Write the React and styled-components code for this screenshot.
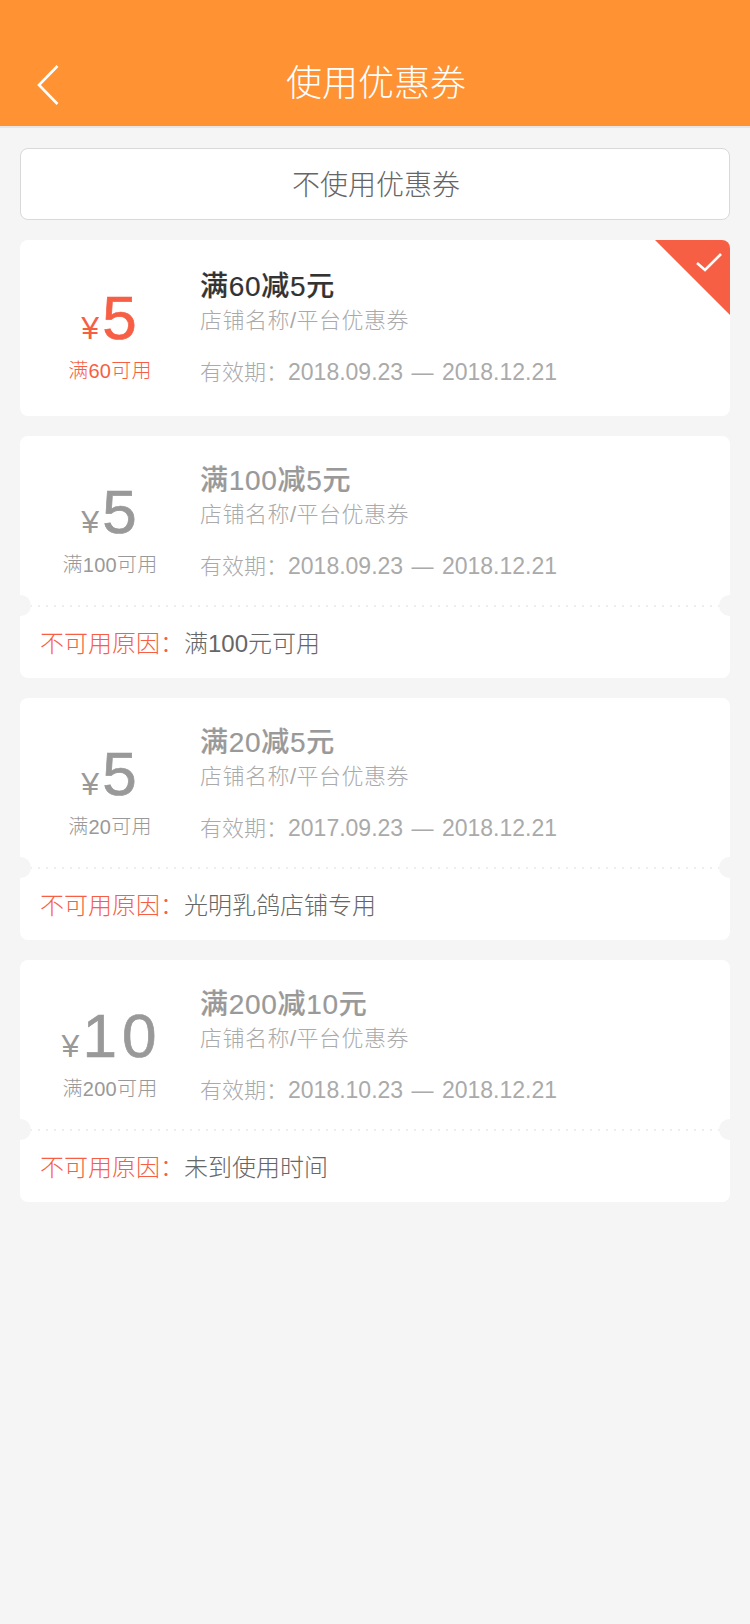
import React from "react";
import styled, { createGlobalStyle } from "styled-components";

const RED = "#f75f45";
const GRAY = "#999999";
const Global = createGlobalStyle`
  html, body { margin: 0; padding: 0; background: #f5f5f5; }
  body { font-family: "Liberation Sans", "Noto Sans CJK SC", sans-serif; font-weight: 300; }
`;
const Page = styled.div`
  width: 750px;
  min-height: 1624px;
  background: #f5f5f5;
  box-sizing: border-box;
`;
const Header = styled.header`
  height: 128px;
  box-sizing: border-box;
  background: #ff9233;
  border-bottom: 2px solid #e6e6e6;
  padding: 59px 0 0 2px;
  position: relative;
  display: flex;
  justify-content: center;
`;
const Back = styled.svg`
  position: absolute;
  left: 36px;
  top: 64px;
  width: 24px;
  height: 42px;
`;
const Title = styled.h1`
  margin: 0;
  font-size: 36px;
  line-height: 50px;
  font-weight: 300;
  color: #fff;
`;
const List = styled.main`
  padding: 20px 20px 0;
  display: flex;
  flex-direction: column;
  gap: 20px;
`;
const NoUse = styled.div`
  height: 72px;
  box-sizing: border-box;
  background: #fff;
  border: 1px solid #d9d9d9;
  border-radius: 8px;
  padding: 0 0 2px 2px;
  display: flex;
  align-items: center;
  justify-content: center;
  font-size: 28px;
  color: #666;
`;
const Card = styled.section`
  position: relative;
  overflow: hidden;
  background: #fff;
  border-radius: 8px;
`;
const Body = styled.div`
  display: grid;
  grid-template-columns: 180px 1fr;
  box-sizing: border-box;
  height: ${p => (p.$active ? 176 : 169)}px;
  padding-top: ${p => (p.$active ? 26 : 24)}px;
`;
const Amount = styled.div`
  display: flex;
  flex-direction: column;
  align-items: center;
  color: ${p => (p.$active ? RED : GRAY)};
`;
const Price = styled.div`
  display: flex;
  align-items: baseline;
  justify-content: center;
  height: 70px;
  margin-top: 17px;
  line-height: 70px;
`;
const Yen = styled.span`
  font-size: 32px;
  margin-right: 3px;
`;
const Value = styled.span`
  font-size: 62px;
  font-weight: 400;
  -webkit-text-stroke: 0.7px currentColor;
  letter-spacing: ${p => (p.$wide ? "5px" : "0")};
  margin-right: ${p => (p.$wide ? "-3px" : "2px")};
`;
const Limit = styled.div`
  font-size: 20px;
  line-height: 28px;
  margin-top: 4px;
  letter-spacing: 0.3px;
`;
const Info = styled.div`
  display: flex;
  flex-direction: column;
`;
const Name = styled.div`
  font-size: 28px;
  line-height: 38px;
  padding-top: 2px;
  font-weight: 500;
  letter-spacing: 0.7px;
  -webkit-text-stroke: 0.2px currentColor;
  color: ${p => (p.$active ? "#333" : GRAY)};
`;
const Shop = styled.div`
  font-size: 22px;
  line-height: 30px;
  letter-spacing: 0.5px;
  color: #aaa;
`;
const Valid = styled.div`
  font-size: 23px;
  line-height: 30px;
  margin-top: 21px;
  color: #aaa;
  white-space: nowrap;
`;
const ValidLabel = styled.span`
  font-size: 22px;
`;
const Dash = styled.span`
  font-size: 22px;
  margin: 0 2px;
`;
const Corner = styled.div`
  position: absolute;
  top: 0;
  right: 0;
  width: 75px;
  height: 75px;
  background: ${RED};
  clip-path: polygon(0 0, 100% 0, 100% 100%);
`;
const Check = styled.svg`
  position: absolute;
  right: 8px;
  top: 13px;
  width: 26px;
  height: 19px;
`;
const Divider = styled.div`
  position: relative;
  height: 2px;
  margin: 0 10px;
  background-image: linear-gradient(to right, #eeeeee 2px, transparent 2px);
  background-size: 8px 2px;
  background-position: 8px 0;
  &::before, &::after {
    content: "";
    position: absolute;
    top: -10px;
    width: 21px;
    height: 21px;
    border-radius: 50%;
    background: #f5f5f5;
  }
  &::before { left: -20px; }
  &::after { right: -20px; }
`;
const Reason = styled.div`
  height: 71px;
  box-sizing: border-box;
  padding: 0 20px 3px 20px;
  display: flex;
  align-items: center;
  font-size: 24px;
  color: #666;
`;
const ReasonLabel = styled.span`
  color: ${RED};
`;

const coupons = [
  { value: "5", limit: "满60可用", name: "满60减5元", from: "2018.09.23", active: true },
  { value: "5", limit: "满100可用", name: "满100减5元", from: "2018.09.23", reason: "满100元可用" },
  { value: "5", limit: "满20可用", name: "满20减5元", from: "2017.09.23", reason: "光明乳鸽店铺专用" },
  { value: "10", limit: "满200可用", name: "满200减10元", from: "2018.10.23", reason: "未到使用时间" },
];

export default function App() {
  return (
    <Page>
      <Global />
      <Header>
        <Back viewBox="0 0 24 42" fill="none" stroke="#fff" strokeWidth="2.6">
          <path d="M21.5 2 L3 21 L21.5 40" />
        </Back>
        <Title>使用优惠券</Title>
      </Header>
      <List>
        <NoUse>不使用优惠券</NoUse>
        {coupons.map(c => (
          <Card key={c.name}>
            <Body $active={c.active}>
              <Amount $active={c.active}>
                <Price>
                  <Yen>¥</Yen>
                  <Value $wide={c.value.length > 1}>{c.value}</Value>
                </Price>
                <Limit>{c.limit}</Limit>
              </Amount>
              <Info>
                <Name $active={c.active}>{c.name}</Name>
                <Shop>店铺名称/平台优惠券</Shop>
                <Valid><ValidLabel>有效期：</ValidLabel>{c.from} <Dash>—</Dash> 2018.12.21</Valid>
              </Info>
            </Body>
            {c.active && (
              <>
                <Corner />
                <Check viewBox="0 0 26 19" fill="none" stroke="#fff" strokeWidth="2.6">
                  <path d="M1 10 L9 17 L25 1" />
                </Check>
              </>
            )}
            {c.reason && (
              <>
                <Divider />
                <Reason><ReasonLabel>不可用原因：</ReasonLabel>{c.reason}</Reason>
              </>
            )}
          </Card>
        ))}
      </List>
    </Page>
  );
}
